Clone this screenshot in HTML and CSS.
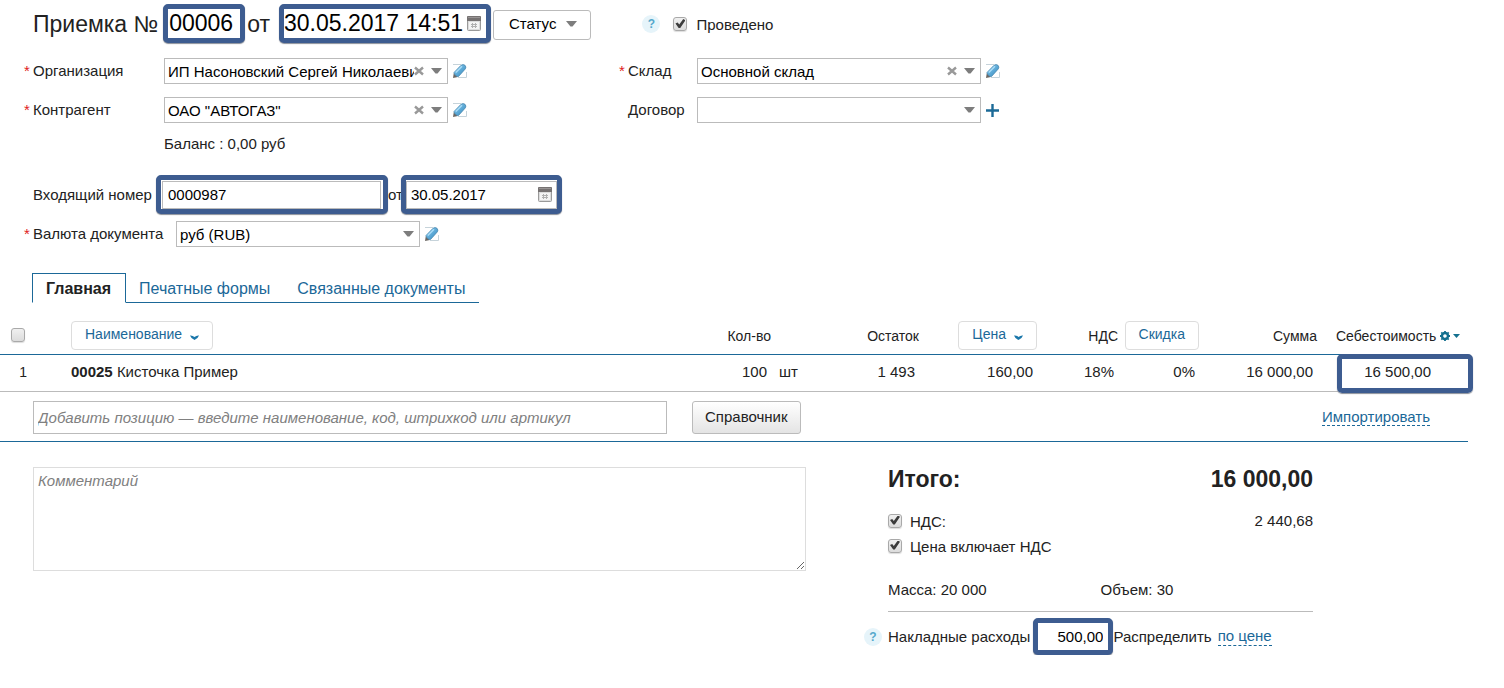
FILE: index.html
```html
<!DOCTYPE html>
<html lang="ru">
<head>
<meta charset="utf-8">
<title>Приемка № 00006</title>
<link rel="stylesheet" href="styles.css">
</head>
<body>
<svg class="sprite" aria-hidden="true">
  <defs>
    <linearGradient id="pen-fill" x1="0" y1="0" x2="1" y2="1">
      <stop offset="0" stop-color="#8fd0f2"/><stop offset="1" stop-color="#2f86bd"/>
    </linearGradient>
    <symbol id="i-edit" viewBox="0 0 14 14">
      <path d="M0 .5h8M13.500 8v5.500H5" stroke="#c6d3da" fill="none"/>
      <path d="M0 14l.8-5L5 13z" fill="#6b6763"/>
      <path d="M1 8.500L8 1.300q2-1.500 4 0 1.600 1.800.3 3.600L5.500 12.500q-1.500.2-2.800-1T1 8.500z" fill="url(#pen-fill)" stroke="#4b89b0" stroke-width=".8"/>
      <path d="M2.800 8.500L9 2.300" stroke="#a9dcf7" stroke-width="1.500"/>
    </symbol>
    <symbol id="i-clear" viewBox="0 0 10 10">
      <path d="M1 1.500l8 7M9 1.500l-8 7" stroke="#999" stroke-width="2.400"/>
    </symbol>
    <symbol id="i-arrow" viewBox="0 0 11 6"><path d="M0 0h11L6.500 5.500h-2z" fill="#7d7d7d"/></symbol>
    <symbol id="i-calendar" viewBox="0 0 14 15">
      <rect x=".5" y=".5" width="13" height="14" rx="1" fill="#dcdcdc" stroke="#9a9a9a"/>
      <path d="M0 1q0-1 1-1h12q1 0 1 1v4H0z" fill="#767272"/><path d="M1 1h12v1H1z" fill="#989494"/>
      <rect x="2" y="6" width="10" height="7" fill="#f4f4f4"/>
      <path d="M4 8.500h6M4 10.500h6M5.500 7v5M8.500 7v5" stroke="#b0b0b0"/>
    </symbol>
    <symbol id="i-plus" viewBox="0 0 13 13"><path d="M6.500 0v13M0 6.500h13" stroke="#1b6a97" stroke-width="2.400"/></symbol>
    <symbol id="i-chevron" viewBox="0 0 9 5"><path d="M0 .5q2.500-.3 4.500 1.500Q6.500.2 9 .5 8 3.500 4.500 5 1 3.500 0 .5z" fill="#1b77aa"/></symbol>
    <symbol id="i-gear" viewBox="0 0 10 10">
      <circle cx="5" cy="5" r="3" fill="none" stroke="#14708f" stroke-width="2.400"/>
      <path d="M5 0v1.500M5 8.500V10M0 5h1.500M8.500 5H10M1.300 1.300l1 1M7.700 7.700l1 1M8.700 1.300l-1 1M2.300 7.700l-1 1" stroke="#14708f" stroke-width="1.800"/>
    </symbol>
    <symbol id="i-small-arrow" viewBox="0 0 7 4"><path d="M0 0h7L3.500 4z" fill="#14708f"/></symbol>
  </defs>
</svg>

<form class="page">
  <header class="head">
    <h1 class="title"><label for="num">Приемка №</label></h1>
    <div class="mark mark-num"><input class="big-input" id="num" value="00006"></div>
    <label class="title" for="date">от</label>
    <div class="mark mark-date">
      <input class="big-input" id="date" value="30.05.2017 14:51">
      <button type="button" class="icon-btn" aria-label="Календарь"><svg width="14" height="15"><use href="#i-calendar"/></svg></button>
    </div>
    <button type="button" class="status">Статус <svg width="11" height="6"><use href="#i-arrow"/></svg></button>
    <div class="posted">
      <span class="help">?</span>
      <input class="check" type="checkbox" id="posted" checked>
      <label for="posted">Проведено</label>
    </div>
  </header>

  <div class="fields">
    <div class="column-left">
      <div class="row">
        <label class="label required" for="org">Организация</label>
        <div class="combo">
          <input id="org" role="combobox" aria-expanded="false" value="ИП Насоновский Сергей Николаевич">
          <button type="button" class="icon-btn" aria-label="Очистить"><svg width="10" height="10"><use href="#i-clear"/></svg></button>
          <button type="button" class="icon-btn" aria-label="Открыть"><svg width="11" height="6"><use href="#i-arrow"/></svg></button>
        </div>
        <button type="button" class="icon-btn" aria-label="Изменить"><svg width="14" height="14"><use href="#i-edit"/></svg></button>
      </div>
      <div class="row">
        <label class="label required" for="agent">Контрагент</label>
        <div class="combo">
          <input id="agent" role="combobox" aria-expanded="false" value='ОАО "АВТОГАЗ"'>
          <button type="button" class="icon-btn" aria-label="Очистить"><svg width="10" height="10"><use href="#i-clear"/></svg></button>
          <button type="button" class="icon-btn" aria-label="Открыть"><svg width="11" height="6"><use href="#i-arrow"/></svg></button>
        </div>
        <button type="button" class="icon-btn" aria-label="Изменить"><svg width="14" height="14"><use href="#i-edit"/></svg></button>
      </div>
      <p class="balance">Баланс : 0,00 руб</p>
    </div>
    <div class="column-right">
      <div class="row">
        <label class="label required" for="store">Склад</label>
        <div class="combo">
          <input id="store" role="combobox" aria-expanded="false" value="Основной склад">
          <button type="button" class="icon-btn" aria-label="Очистить"><svg width="10" height="10"><use href="#i-clear"/></svg></button>
          <button type="button" class="icon-btn" aria-label="Открыть"><svg width="11" height="6"><use href="#i-arrow"/></svg></button>
        </div>
        <button type="button" class="icon-btn" aria-label="Изменить"><svg width="14" height="14"><use href="#i-edit"/></svg></button>
      </div>
      <div class="row">
        <label class="label" for="contract">Договор</label>
        <div class="combo">
          <select id="contract"><option></option></select>
          <svg class="select-arrow" width="11" height="6"><use href="#i-arrow"/></svg>
        </div>
        <button type="button" class="icon-btn" aria-label="Добавить"><svg width="13" height="13"><use href="#i-plus"/></svg></button>
      </div>
    </div>
  </div>

  <div class="incoming">
    <label class="label" for="in-num">Входящий номер</label>
    <div class="mark mark-in"><input class="inner-input" id="in-num" value="0000987"></div>
    <label for="in-date">от</label>
    <div class="mark mark-in-date">
      <div class="inner-input date-box">
        <input id="in-date" value="30.05.2017">
        <button type="button" class="icon-btn" aria-label="Календарь"><svg width="14" height="15"><use href="#i-calendar"/></svg></button>
      </div>
    </div>
  </div>

  <div class="row currency">
    <label class="label required" for="cur">Валюта документа</label>
    <div class="combo">
      <select id="cur"><option>руб (RUB)</option></select>
      <svg class="select-arrow" width="11" height="6"><use href="#i-arrow"/></svg>
    </div>
    <button type="button" class="icon-btn" aria-label="Изменить"><svg width="14" height="14"><use href="#i-edit"/></svg></button>
  </div>

  <nav class="tabs">
    <a class="tab active" href="#main">Главная</a>
    <a class="tab" href="#print">Печатные формы</a>
    <a class="tab" href="#linked">Связанные документы</a>
  </nav>

  <section class="goods" id="main">
    <table class="items">
      <colgroup>
        <col class="c-check"><col><col class="c-qty"><col class="c-unit"><col class="c-wide"><col class="c-wide">
        <col class="c-narrow"><col class="c-narrow"><col class="c-wide"><col class="c-cost">
      </colgroup>
      <thead>
        <tr>
          <th class="pick"><input class="check" type="checkbox" aria-label="Выбрать все"></th>
          <th class="name"><button type="button" class="head-btn">Наименование <svg width="9" height="5"><use href="#i-chevron"/></svg></button></th>
          <th>Кол-во</th>
          <th></th>
          <th>Остаток</th>
          <th><button type="button" class="head-btn">Цена <svg width="9" height="5"><use href="#i-chevron"/></svg></button></th>
          <th>НДС</th>
          <th><button type="button" class="head-btn">Скидка</button></th>
          <th>Сумма</th>
          <th class="cost-head">Себестоимость
            <button type="button" class="icon-btn gear" aria-label="Настройка"><svg width="10" height="10"><use href="#i-gear"/></svg><svg width="7" height="4"><use href="#i-small-arrow"/></svg></button>
          </th>
        </tr>
      </thead>
      <tbody>
        <tr>
          <td class="index">1</td>
          <td class="name"><b>00025</b> Кисточка Пример</td>
          <td>100</td>
          <td class="unit">шт</td>
          <td>1 493</td>
          <td>160,00</td>
          <td>18%</td>
          <td>0%</td>
          <td>16 000,00</td>
          <td class="cost">16 500,00</td>
        </tr>
      </tbody>
    </table>
    <div class="add">
      <input class="add-input" aria-label="Добавить позицию" placeholder="Добавить позицию — введите наименование, код, штрихкод или артикул">
      <button type="button" class="catalog">Справочник</button>
      <a class="dashed import" href="#import">Импортировать</a>
    </div>
  </section>

  <div class="bottom">
    <textarea class="comment" aria-label="Комментарий" placeholder="Комментарий"></textarea>
    <section class="totals">
      <div class="sum"><span>Итого:</span><span>16 000,00</span></div>
      <div class="option">
        <input class="check" type="checkbox" id="vat" checked><label for="vat">НДС:</label><span class="amount">2 440,68</span>
      </div>
      <div class="option">
        <input class="check" type="checkbox" id="incl" checked><label for="incl">Цена включает НДС</label>
      </div>
      <div class="weights"><span>Масса: 20 000</span><span>Объем: 30</span></div>
      <div class="overhead">
        <span class="help">?</span>
        <label for="over">Накладные расходы</label>
        <div class="mark mark-over"><input id="over" value="500,00"></div>
        <span>Распределить</span>
        <a class="dashed by" href="#by-price">по цене</a>
      </div>
    </section>
  </div>
</form>
</body>
</html>
```
FILE: styles.css
```css
* { box-sizing: border-box; }

body {
  margin: 0;
  background: #fff;
  color: #222;
  font: 15px/18px "Liberation Sans", Arial, sans-serif;
}

input, select, button, textarea { font: inherit; color: #000; margin: 0; }
button { cursor: pointer; }
svg { display: block; flex: none; }
.sprite { position: absolute; width: 0; height: 0; }

.icon-btn {
  display: flex;
  align-items: center;
  flex: none;
  padding: 0;
  border: 0;
  background: none;
}

/* Thick rounded frames that call out key values */
.mark {
  display: flex;
  align-items: center;
  flex: none;
  border: 5px solid #3d5c90;
  border-radius: 5px;
  box-shadow: 0 1px 1px #8a8f99;
  background: #fff;
}
.mark input { border: 0; padding: 0; min-width: 0; width: 100%; background: none; outline: 0; }

.check {
  appearance: none;
  flex: none;
  width: 14px;
  height: 14px;
  border: 1px solid #a9a9a9;
  border-radius: 3px;
  background: linear-gradient(#f0f0f0, #dcdcdc);
  box-shadow: 0 1px 1px #ddd;
}
.check:checked::before {
  content: "";
  display: block;
  width: 10px;
  height: 9px;
  margin: 1px;
  background: #3c3c3c;
  clip-path: polygon(0 50%, 22% 38%, 38% 62%, 78% 0, 100% 14%, 48% 100%, 32% 100%);
}

.help {
  flex: none;
  width: 18px;
  height: 18px;
  border-radius: 9px;
  background: #e6f4fa;
  color: #55a8cc;
  font-size: 12px;
  font-weight: bold;
  text-align: center;
}

.head { display: flex; align-items: center; padding: 4px 0 0 33px; }
.title { margin: 0; font-size: 23px; line-height: 28px; font-weight: normal; }
.big-input { font-size: 23px; height: 28px; }
.mark-num { width: 82px; height: 39px; margin: 0 2px 0 5px; padding-left: 1px; }
.mark-date { width: 212px; height: 39px; margin-left: 9px; padding-right: 5px; }
.status {
  display: flex;
  align-items: center;
  gap: 10px;
  height: 30px;
  margin: 2px 0 0 2px;
  padding: 0 13px 2px 15px;
  border: 1px solid #bbb;
  border-radius: 3px;
  background: #fff;
}
.posted { display: flex; align-items: center; margin: 1px 0 0 51px; }
.posted .check { margin: 0 9px 0 13px; }
.posted label { padding-top: 2px; }

.fields { display: flex; padding: 15px 0 0 24px; }
.column-left { width: 595px; }
.row { display: flex; align-items: center; height: 26px; margin-bottom: 13px; }
.label { flex: none; width: 140px; padding-left: 9px; }
.required { position: relative; }
.required::before { content: "*"; position: absolute; left: 0; color: #e02020; }
.column-right .label { width: 78px; }
.combo {
  display: flex;
  align-items: center;
  gap: 7px;
  position: relative;
  width: 284px;
  height: 26px;
  margin-right: 5px;
  padding: 0 5px 0 3px;
  border: 1px solid #bbb;
}
.combo input { flex: 1; min-width: 0; height: 24px; padding: 1px 0 0; border: 0; outline: 0; margin-right: -7px; }
.combo select { flex: 1; height: 24px; padding: 1px 0 0; border: 0; appearance: none; background: none; outline: 0; }
.select-arrow { position: absolute; right: 5px; pointer-events: none; }
.balance { margin: 0; padding-left: 140px; line-height: 16px; }

.incoming { display: flex; align-items: center; padding: 23px 0 0 24px; }
.incoming .label { width: 132px; }
.mark-in { width: 232px; height: 39px; }
.mark-in-date { width: 161px; height: 39px; margin-left: -2px; }
.mark .inner-input { flex: 1; height: 28px; margin: 0 2px 0 1px; padding: 0 5px; border: 1px solid #bbb; }
.mark .date-box { display: flex; align-items: center; margin: 0; padding: 0 4px; }

.currency { margin: 7px 0 0; padding-left: 24px; }
.currency .label { width: 152px; }
.currency .combo { width: 244px; }

.tabs { display: flex; width: max-content; margin: 26px 0 0 32px; font-size: 16px; }
.tab {
  height: 30px;
  padding: 7px 14px 0 13px;
  border-bottom: 1px solid #1b6898;
  color: #1b6898;
  text-decoration: none;
}
.tab.active {
  padding-top: 6px;
  border: 1px solid #1b6898;
  border-bottom-color: #fff;
  color: #222;
  font-weight: bold;
}

.goods { margin-right: 36px; border-bottom: 1px solid #1b6898; }
.items { width: 100%; table-layout: fixed; border-collapse: separate; border-spacing: 0; }
.c-check { width: 36px; }
.c-qty { width: 70px; }
.c-unit { width: 30px; }
.c-wide { width: 118px; }
.c-narrow { width: 81px; }
.c-cost { width: 151px; }
.items th {
  height: 52px;
  padding: 14px 0 0;
  border-bottom: 1px solid #1b6898;
  font-size: 14px;
  font-weight: normal;
  text-align: right;
  white-space: nowrap;
}
.items td {
  height: 37px;
  padding: 0 4px 2px 0;
  border-bottom: 1px solid #bbb;
  text-align: right;
  white-space: nowrap;
}
.items .pick { padding: 12px 0 0 11px; text-align: left; }
.pick .check { display: block; }
.items .name { padding-left: 35px; text-align: left; }
.items .index { padding-right: 9px; font-size: 14px; }
.items .unit { padding-left: 8px; text-align: left; }
.head-btn {
  display: inline-flex;
  align-items: center;
  gap: 8px;
  height: 29px;
  padding: 0 13px 3px;
  border: 1px solid #ddd;
  border-radius: 4px;
  background: #fff;
  color: #1b6898;
  vertical-align: middle;
}
.head-btn svg { margin-top: 6px; }
.items .cost-head { padding-left: 19px; text-align: left; }
.gear { display: inline-flex; gap: 3px; }
.items .cost { position: relative; padding-right: 37px; }
.cost::after {
  content: "";
  position: absolute;
  inset: -1px -5px -2px 20px;
  border: 5px solid #3d5c90;
  border-radius: 5px;
  box-shadow: 0 1px 1px #8a8f99;
}

.add { display: flex; align-items: center; padding: 9px 38px 7px 33px; }
.add-input { width: 634px; height: 33px; padding: 0 4px; border: 1px solid #bbb; font-style: italic; }
.add-input::placeholder, .comment::placeholder { color: #808080; opacity: 1; }
.catalog {
  height: 33px;
  margin-left: 25px;
  padding: 0 12px 1px;
  border: 1px solid #bbb;
  border-radius: 3px;
  background: linear-gradient(#fff, #e4e4e4);
  color: #222;
}
.dashed { color: #1b6898; text-decoration: none; border-bottom: 1px dashed #1b6898; }
.import { margin: -2px 0 0 auto; line-height: 17px; }

.bottom { display: flex; align-items: flex-start; gap: 58px; padding: 25px 191px 0 33px; }
.comment { flex: 1; height: 104px; padding: 4px; border: 1px solid #ddd; font-style: italic; outline: 0; }
.totals { width: 449px; padding-left: 24px; }
.sum { display: flex; justify-content: space-between; margin-bottom: 18px; font-size: 23px; line-height: 24px; font-weight: bold; }
.option { display: flex; align-items: center; gap: 8px; height: 25px; }
.option .check { margin-bottom: 2px; }
.amount { margin-left: auto; padding-bottom: 2px; }
.weights {
  display: grid;
  grid-template-columns: 1fr 1fr;
  padding: 22px 0 12px;
  border-bottom: 1px solid #bbb;
}
.overhead { display: flex; align-items: center; margin: 6px 0 0 -24px; white-space: nowrap; }
.overhead .help { margin-right: 6px; }
.mark-over { width: 80px; height: 37px; margin-left: 3px; }
.mark-over input { text-align: right; padding-right: 5px; }
.by { margin-left: 6px; }
```
